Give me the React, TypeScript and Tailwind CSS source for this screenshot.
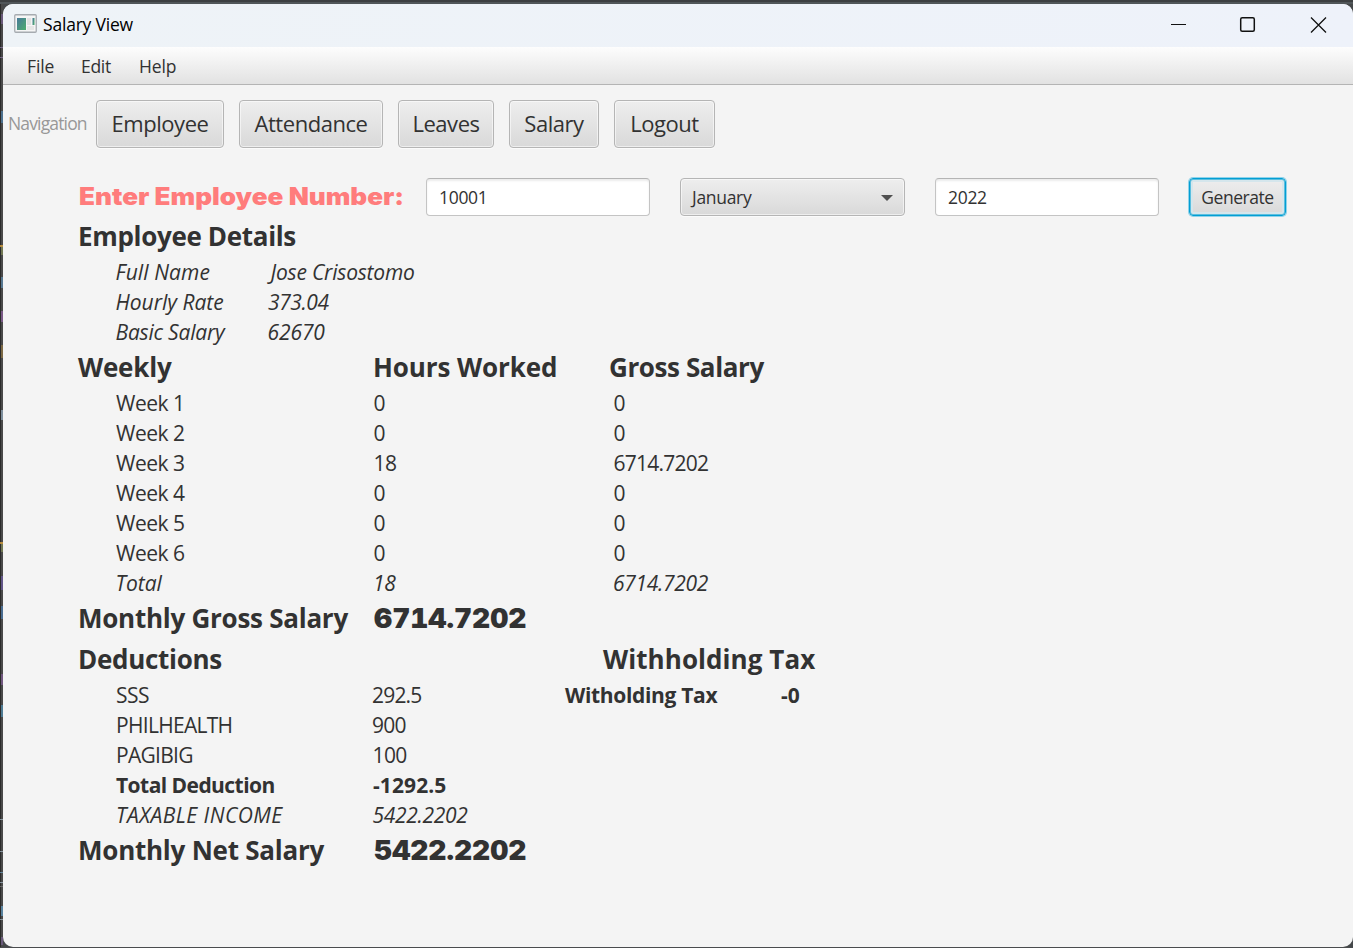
import React from "react";

const weeks = [
  ["Week 1", "0", "0"],
  ["Week 2", "0", "0"],
  ["Week 3", "18", "6714.7202"],
  ["Week 4", "0", "0"],
  ["Week 5", "0", "0"],
  ["Week 6", "0", "0"],
];

const heading = "text-[26px] font-bold whitespace-nowrap";
const black = "font-['Inter','Liberation_Sans',sans-serif] font-black whitespace-nowrap";
const amount = `${black} inline-block origin-left scale-x-[1.04] pl-px text-[27px] tabular-nums`;
const raised =
  "rounded-[4px] border border-[#b5b5b5] bg-linear-to-b from-[#eeeeee] to-[#d9d9d9] shadow-[inset_0_0_0_1px_rgba(255,255,255,0.55),0_1px_0_#fbfbfb]";
const navButton = `${raised} h-[48px] pb-[2px] tracking-[-0.45px]`;
const field =
  "h-[38px] rounded-[4px] border border-[#c4c4c4] border-t-[#b4b4b4] bg-white px-3 text-[17.5px] tracking-[-0.3px] text-[#323232] shadow-[inset_0_2px_2px_#ececec] outline-none";

type DetailProps = { label: string; value: string; labelClass: string; valueClass: string };

function DetailRow({ label, value, labelClass, valueClass }: DetailProps) {
  return (
    <div className="flex h-[30px] items-center pl-[37.5px] text-[21px] italic">
      <span className={`w-[152px] ${labelClass}`}>{label}</span>
      <span className={valueClass}>{value}</span>
    </div>
  );
}

function AppIcon() {
  return (
    <svg width="24" height="20" viewBox="0 0 24 20">
      <defs>
        <linearGradient id="pane" x1="0" y1="0" x2="1" y2="1">
          <stop offset="0" stopColor="#47799a" />
          <stop offset="1" stopColor="#4fae6e" />
        </linearGradient>
      </defs>
      <rect x="0.75" y="0.75" width="21.5" height="17.5" rx="1" fill="#f5f5f5" stroke="#a6abb0" strokeWidth="1.3" />
      <rect x="3" y="4" width="9" height="12" fill="url(#pane)" />
      <rect x="13" y="4" width="4" height="7" fill="#e2e2e2" />
      <rect x="13" y="12" width="7" height="4" fill="#e6e6e6" />
      <rect x="18.5" y="4" width="2" height="7" fill="url(#pane)" />
    </svg>
  );
}

const marks: [number, number, string][] = [
  [14, 10, "#76608c"], [47, 1, "#8a74a0"], [57, 1, "#8a74a0"], [111, 12, "#4f7fa6"],
  [245, 2, "#e0a53c"], [247, 8, "#7f8757"], [277, 11, "#5b87a8"], [311, 11, "#8a5f99"],
  [345, 13, "#8c7343"], [410, 10, "#8fa6b8"], [542, 2, "#e0a53c"], [544, 8, "#7f8757"],
  [576, 14, "#6a5a9c"], [606, 13, "#4a78a8"], [674, 11, "#7d5c91"], [705, 12, "#4f8bab"],
  [819, 1, "#9fb0bd"], [851, 1, "#9fb0bd"], [872, 1, "#6f9cba"], [882, 1, "#9fb0bd"],
  [886, 1, "#777777"], [906, 10, "#5e95bb"], [919, 1, "#9fb0bd"], [937, 8, "#76608c"],
];

function EditorEdge() {
  return (
    <svg className="shrink-0" width="3" height="943" viewBox="0 4 3 943" shapeRendering="crispEdges">
      <rect y="4" width="3" height="943" fill="#494949" />
      <rect y="4" width="1" height="943" fill="#2b2b2b" />
      {marks.map(([y, h, color]) => (
        <rect key={y} x={h > 2 ? 1 : 0} y={y} width={h > 2 ? 2 : 3} height={h} fill={color} opacity="0.75" />
      ))}
    </svg>
  );
}

export default function App() {
  return (
    <div className="flex h-[948px] w-[1353px] flex-col overflow-hidden bg-[#45484a] font-['Open_Sans','Noto_Sans',sans-serif] text-[#323232]">
      <div className="h-[4px] shrink-0 border-b-2 border-[#505659] bg-[#3c3f41]" />
      <div className="flex h-[943px] shrink-0">
        <EditorEdge />
        <div className="flex w-[1350px] flex-col overflow-hidden rounded-[10px] bg-[#f4f4f4]">
          <header className="flex h-[43px] shrink-0 items-center bg-linear-to-r from-[#eef3f7] to-[#eef2fa] pb-[3px] pl-[11px] text-black">
            <AppIcon />
            <span className="ml-[5px] text-[17.5px] tracking-[-0.2px]">Salary View</span>
            <svg className="ml-auto mr-[26px] mt-[2px]" width="157" height="18" viewBox="0 0 157 18" fill="none" stroke="#111" strokeWidth="1.3">
              <path d="M1 8.5h15" strokeWidth="1" shapeRendering="crispEdges" />
              <rect x="70.7" y="1.7" width="13.6" height="13.6" rx="1.5" strokeWidth="1.5" />
              <path d="M141 1.5l15 15M156 1.5l-15 15" />
            </svg>
          </header>
          <nav className="flex h-[38px] shrink-0 items-center border-b border-[#b4b4b4] bg-linear-to-b from-[#fdfdfd] to-[#e2e2e2] pt-[2px] pl-6 text-[17.5px] tracking-[-0.1px]">
            <span className="w-[54px]">File</span>
            <span className="w-[58px] tracking-[-0.3px]">Edit</span>
            <span>Help</span>
          </nav>

          <div className="mt-[15px] flex h-[48px] shrink-0 items-center pl-[5px] text-[22px]">
            <span className="w-[88px] pb-px text-[17.5px] tracking-[-0.85px] text-[#989898]">Navigation</span>
            <div className="flex gap-[15px]">
              <button className={`${navButton} w-[128px]`}>Employee</button>
              <button className={`${navButton} w-[144px]`}>Attendance</button>
              <button className={`${navButton} w-[96px]`}>Leaves</button>
              <button className={`${navButton} w-[90px]`}>Salary</button>
              <button className={`${navButton} w-[101px]`}>Logout</button>
            </div>
          </div>

          <main className="mt-[30px] pl-[75px]">
            <div className="flex h-[38px] items-center">
              <div className="w-[348px] pl-px">
                <span className={`${black} inline-block origin-left scale-x-[1.088] text-[24px] text-[#ff7c7c]`}>Enter Employee Number:</span>
              </div>
              <input className={`${field} w-[224px]`} defaultValue="10001" />
              <button className={`${raised} ml-[30px] flex h-[38px] w-[225px] items-center justify-between pl-[11px] pr-[11px] pt-px text-[17.5px] tracking-[-0.3px]`}>
                <span>January</span>
                <svg width="12" height="6" viewBox="0 0 12 6"><path d="M0 0h12L6 6z" fill="#505050" /></svg>
              </button>
              <input className={`${field} ml-[30px] w-[224px]`} defaultValue="2022" />
              <button className="ml-[30px] h-[38px] w-[97px] rounded-[4px] border border-[#039ed3] bg-linear-to-b from-[#eeeeee] to-[#d9d9d9] pt-px text-[17.5px] tracking-[-0.45px] shadow-[0_0_0_1px_#8fd3ea,inset_0_0_0_1px_#5cbfdf,inset_0_0_0_3px_#d5e6ec]">
                Generate
              </button>
            </div>

            <section className="mt-px">
              <h2 className={`${heading} flex h-[41px] items-center pb-[2px] tracking-[-0.33px]`}>Employee Details</h2>
              <DetailRow label="Full Name" value="Jose Crisostomo" labelClass="tracking-[0.1px]" valueClass="pl-[3px] tracking-[-0.2px]" />
              <DetailRow label="Hourly Rate" value="373.04" labelClass="" valueClass="pl-[0.5px] tracking-[-0.4px]" />
              <DetailRow label="Basic Salary" value="62670" labelClass="tracking-[-0.2px]" valueClass="tracking-[-0.1px]" />
            </section>

            <section>
              <div className={`${heading} flex h-[41px] items-center pb-[2px]`}>
                <h2 className="w-[295px] tracking-[-0.2px]">Weekly</h2>
                <h2 className="w-[236px] tracking-[-0.1px]">Hours Worked</h2>
                <h2 className="tracking-[-0.4px]">Gross Salary</h2>
              </div>
              {weeks.map(([label, hours, gross]) => (
                <div key={label} className="flex h-[30px] items-center pl-[38px] text-[21px] tracking-[-0.5px]">
                  <span className="w-[257.5px]">{label}</span>
                  <span className="w-[240px]">{hours}</span>
                  <span className="tracking-[-0.75px]">{gross}</span>
                </div>
              ))}
              <div className="flex h-[30px] items-center pl-[37.5px] text-[21px] italic tracking-[-0.3px]">
                <span className="w-[257.5px] tracking-normal">Total</span>
                <span className="w-[240px]">18</span>
                <span>6714.7202</span>
              </div>
              <div className="flex h-[41px] items-center">
                <h2 className={`${heading} w-[295px] pb-[2px] tracking-[-0.26px]`}>Monthly Gross Salary</h2>
                <span className={amount}>6714.7202</span>
              </div>
            </section>

            <section>
              <div className={`${heading} flex h-[41px] items-center pb-[2px]`}>
                <h2 className="w-[525px] tracking-[-0.3px]">Deductions</h2>
                <h2 className="tracking-[0.07px]">Withholding Tax</h2>
              </div>
              <div className="-mt-px mb-px flex pl-[38px] text-[21px] leading-[30px]">
                <div className="w-[256px] tracking-[-0.55px]">
                  <div>SSS</div>
                  <div className="tracking-[-0.7px]">PHILHEALTH</div>
                  <div className="tracking-[-0.7px]">PAGIBIG</div>
                  <div className="font-bold">Total Deduction</div>
                  <div className="italic tracking-[0.45px]">TAXABLE INCOME</div>
                </div>
                <div className="w-[193px]">
                  <div className="tracking-[-0.8px]">292.5</div>
                  <div className="tracking-[-0.7px]">900</div>
                  <div className="pl-[0.5px] tracking-[-0.6px]">100</div>
                  <div className="pl-px font-bold tracking-[0.1px]">-1292.5</div>
                  <div className="pl-[0.5px] italic tracking-[-0.3px]">5422.2202</div>
                </div>
                <div className="flex font-bold">
                  <span className="w-[216px] tracking-[-0.33px]">Witholding Tax</span>
                  <span>-0</span>
                </div>
              </div>
              <div className="flex h-[41px] items-center">
                <h2 className={`${heading} w-[295px] pb-[2px] tracking-[-0.24px]`}>Monthly Net Salary</h2>
                <span className={amount}>5422.2202</span>
              </div>
            </section>
          </main>
        </div>
      </div>
      <div className="h-px shrink-0 bg-[#4a4c4e]" />
    </div>
  );
}
